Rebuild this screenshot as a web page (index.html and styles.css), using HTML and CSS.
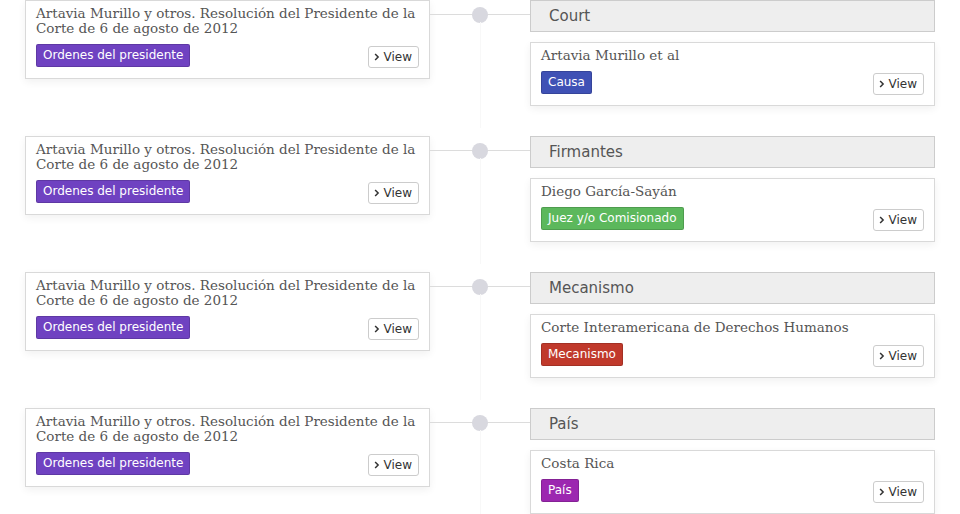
FILE: index.html
```html
<!DOCTYPE html>
<html lang="es">
<head>
<meta charset="utf-8">
<title>Timeline</title>
<link rel="stylesheet" href="styles.css">
</head>
<body>
<div class="timeline">

  <div class="row">
    <div class="card left">
      <div class="title">Artavia Murillo y otros. Resolución del Presidente de la Corte de 6 de agosto de 2012</div>
      <div class="foot"><span class="tag purple">Ordenes del presidente</span><button class="view"><svg viewBox="0 0 8 10" width="6" height="8"><path d="M1.5 1 L5.5 5 L1.5 9" fill="none" stroke="#333" stroke-width="2"/></svg>View</button></div>
    </div>
    <div class="link"><span class="line"></span><span class="dot"></span><span class="vline"></span></div>
    <div class="right">
      <div class="header">Court</div>
      <div class="card">
        <div class="title">Artavia Murillo et al</div>
        <div class="foot"><span class="tag blue">Causa</span><button class="view"><svg viewBox="0 0 8 10" width="6" height="8"><path d="M1.5 1 L5.5 5 L1.5 9" fill="none" stroke="#333" stroke-width="2"/></svg>View</button></div>
      </div>
    </div>
  </div>

  <div class="row">
    <div class="card left">
      <div class="title">Artavia Murillo y otros. Resolución del Presidente de la Corte de 6 de agosto de 2012</div>
      <div class="foot"><span class="tag purple">Ordenes del presidente</span><button class="view"><svg viewBox="0 0 8 10" width="6" height="8"><path d="M1.5 1 L5.5 5 L1.5 9" fill="none" stroke="#333" stroke-width="2"/></svg>View</button></div>
    </div>
    <div class="link"><span class="line"></span><span class="dot"></span><span class="vline"></span></div>
    <div class="right">
      <div class="header">Firmantes</div>
      <div class="card">
        <div class="title">Diego García-Sayán</div>
        <div class="foot"><span class="tag green">Juez y/o Comisionado</span><button class="view"><svg viewBox="0 0 8 10" width="6" height="8"><path d="M1.5 1 L5.5 5 L1.5 9" fill="none" stroke="#333" stroke-width="2"/></svg>View</button></div>
      </div>
    </div>
  </div>

  <div class="row">
    <div class="card left">
      <div class="title">Artavia Murillo y otros. Resolución del Presidente de la Corte de 6 de agosto de 2012</div>
      <div class="foot"><span class="tag purple">Ordenes del presidente</span><button class="view"><svg viewBox="0 0 8 10" width="6" height="8"><path d="M1.5 1 L5.5 5 L1.5 9" fill="none" stroke="#333" stroke-width="2"/></svg>View</button></div>
    </div>
    <div class="link"><span class="line"></span><span class="dot"></span><span class="vline"></span></div>
    <div class="right">
      <div class="header">Mecanismo</div>
      <div class="card">
        <div class="title">Corte Interamericana de Derechos Humanos</div>
        <div class="foot"><span class="tag red">Mecanismo</span><button class="view"><svg viewBox="0 0 8 10" width="6" height="8"><path d="M1.5 1 L5.5 5 L1.5 9" fill="none" stroke="#333" stroke-width="2"/></svg>View</button></div>
      </div>
    </div>
  </div>

  <div class="row">
    <div class="card left">
      <div class="title">Artavia Murillo y otros. Resolución del Presidente de la Corte de 6 de agosto de 2012</div>
      <div class="foot"><span class="tag purple">Ordenes del presidente</span><button class="view"><svg viewBox="0 0 8 10" width="6" height="8"><path d="M1.5 1 L5.5 5 L1.5 9" fill="none" stroke="#333" stroke-width="2"/></svg>View</button></div>
    </div>
    <div class="link"><span class="line"></span><span class="dot"></span><span class="vline"></span></div>
    <div class="right">
      <div class="header">País</div>
      <div class="card">
        <div class="title">Costa Rica</div>
        <div class="foot"><span class="tag magenta">País</span><button class="view"><svg viewBox="0 0 8 10" width="6" height="8"><path d="M1.5 1 L5.5 5 L1.5 9" fill="none" stroke="#333" stroke-width="2"/></svg>View</button></div>
      </div>
    </div>
  </div>

</div>
</body>
</html>
```

FILE: styles.css
```css
* { box-sizing: border-box; }
html, body { margin: 0; padding: 0; background: #fff; }
body { font-family: "DejaVu Sans", sans-serif; color: #333; }

.timeline {
  padding: 0 25px;
  display: flex;
  flex-direction: column;
}

.row {
  display: grid;
  grid-template-columns: 405px 100px 405px;
  height: 136px;
  align-items: start;
}

.card {
  background: #fff;
  border: 1px solid #d9d9d9;
  box-shadow: 0 3px 8px rgba(0, 0, 0, 0.06);
  padding: 5px 10px 11px 10px;
}

.card.left { height: 79px; }

.title {
  font-family: "DejaVu Serif", serif;
  font-size: 13.5px;
  line-height: 15px;
  color: #555;
}

.foot {
  display: flex;
  justify-content: space-between;
  align-items: flex-start;
  margin-top: 8px;
}

.tag {
  display: inline-block;
  color: #fff;
  font-size: 12px;
  line-height: 15px;
  padding: 3px 6px;
  border-radius: 2px;
  border: 1px solid rgba(0,0,0,0.15);
}
.purple { background: #6f42c1; }
.blue { background: #3f51b5; }
.green { background: #5cb85c; }
.red { background: #c0392b; }
.magenta { background: #9c27b0; }

.view {
  margin-top: 2px;
  display: inline-flex;
  align-items: center;
  gap: 4px;
  height: 22px;
  padding: 0 6px 0 5px;
  background: #fff;
  border: 1px solid #ccc;
  border-radius: 3px;
  font-family: "DejaVu Sans", sans-serif;
  font-size: 12px;
  color: #333;
}

.link {
  position: relative;
  height: 136px;
}
.link .line {
  position: absolute;
  left: 0; right: 0;
  top: 14px;
  border-top: 1px solid #dcdcdc;
}
.link .dot {
  position: absolute;
  left: 42px;
  top: 7px;
  width: 16px;
  height: 16px;
  border-radius: 50%;
  background: #d8d8df;
}
.link .vline {
  position: absolute;
  left: 50px;
  top: 22px;
  height: 106px;
  border-left: 1px solid #f8f8f8;
}

.right {
  display: flex;
  flex-direction: column;
  gap: 10px;
}

.header {
  height: 32px;
  background: #eeeeee;
  border: 1px solid #cccccc;
  padding-left: 18px;
  font-size: 15px;
  line-height: 30px;
  color: #555;
}

.right .card { height: 64px; }
```
